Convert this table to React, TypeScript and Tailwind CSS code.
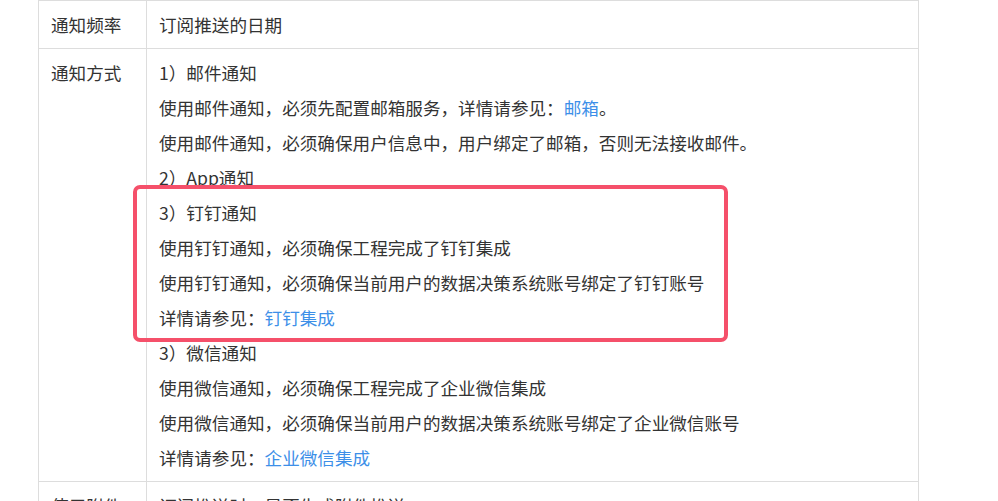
import React from "react";

const Link = ({ children }: { children: React.ReactNode }) => (
  <span className="text-[#3d8fe8]">{children}</span>
);

export default function App() {
  const lines: React.ReactNode[] = [
    "1）邮件通知",
    <>使用邮件通知，必须先配置邮箱服务，详情请参见：<Link>邮箱</Link>。</>,
    "使用邮件通知，必须确保用户信息中，用户绑定了邮箱，否则无法接收邮件。",
    "2）App通知",
    "3）钉钉通知",
    "使用钉钉通知，必须确保工程完成了钉钉集成",
    "使用钉钉通知，必须确保当前用户的数据决策系统账号绑定了钉钉账号",
    <>详情请参见：<Link>钉钉集成</Link></>,
    "3）微信通知",
    "使用微信通知，必须确保工程完成了企业微信集成",
    "使用微信通知，必须确保当前用户的数据决策系统账号绑定了企业微信账号",
    <>详情请参见：<Link>企业微信集成</Link></>,
  ];
  return (
    <div
      className="relative w-[998px] h-[501px] overflow-hidden bg-white text-[#333] text-[17.6px] leading-[35px]"
      style={{ fontFamily: '"Noto Sans CJK SC", "Noto Sans", sans-serif' }}
    >
      <div className="ml-[38px] w-[881px] border-x border-t border-[#dddddd]">
        <div className="flex border-b border-[#dddddd]">
          <div className="w-[108px] shrink-0 border-r border-[#dddddd] px-[12px] py-[6px]">通知频率</div>
          <div className="flex-1 px-[12px] py-[6px]">订阅推送的日期</div>
        </div>
        <div className="flex border-b border-[#dddddd]">
          <div className="w-[108px] shrink-0 border-r border-[#dddddd] px-[12px] py-[6px]">通知方式</div>
          <div className="flex-1 px-[12px] py-[6px]">
            {lines.map((l, i) => (
              <div key={i}>{l}</div>
            ))}
          </div>
        </div>
        <div className="flex border-b border-[#dddddd]">
          <div className="w-[108px] shrink-0 border-r border-[#dddddd] px-[12px] py-[6px]">使用附件</div>
          <div className="flex-1 px-[12px] py-[6px]">订阅推送时，是否生成附件推送</div>
        </div>
      </div>
      <div className="absolute left-[133px] top-[185px] w-[595px] h-[157px] border-4 border-[#f5506a] rounded-[7px]" />
    </div>
  );
}
